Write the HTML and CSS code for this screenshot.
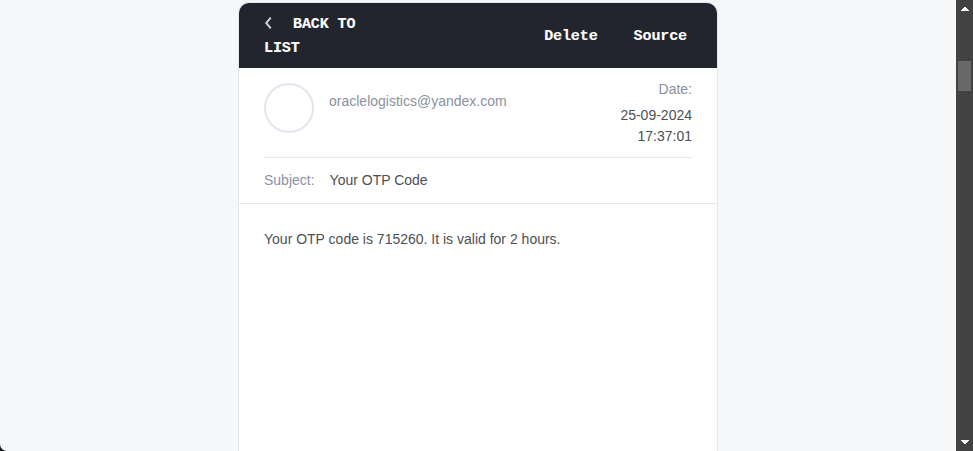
FILE: index.html
```html
<!DOCTYPE html>
<html lang="en">
<head>
<meta charset="utf-8">
<title>Message</title>
<link rel="stylesheet" href="styles.css">
</head>
<body>
<div class="page">
  <main class="viewport">
    <article class="card">
      <header class="toolbar">
        <a class="back"><svg class="chevron" viewBox="0 0 8 12" width="8" height="12"><path d="M6.8.6 2.2 6l4.6 5.4"/></svg>BACK TO LIST</a>
        <nav class="actions"><a>Delete</a><a>Source</a></nav>
      </header>
      <section class="sender">
        <span class="avatar"></span>
        <span class="email">oraclelogistics@yandex.com</span>
        <div class="date"><span class="label">Date:</span><time>25-09-2024 17:37:01</time></div>
      </section>
      <section class="subject"><span class="label">Subject:</span><span>Your OTP Code</span></section>
      <section class="message">Your OTP code is 715260. It is valid for 2 hours.</section>
    </article>
  </main>
  <aside class="scrollbar">
    <svg width="8" height="4" viewBox="0 0 8 4"><path d="M3 0h2v1h1v1h1v1h1v1H0V3h1V2h1V1h1z"/></svg>
    <div class="track"><div class="thumb"></div></div>
    <svg width="8" height="4" viewBox="0 0 8 4"><path d="M0 0h8v1H7v1H6v1H5v1H3V3H2V2H1V1H0z"/></svg>
  </aside>
</div>
</body>
</html>
```
FILE: styles.css
```css
* { box-sizing: border-box; }
body {
  margin: 0;
  background: #17181b;
  color: #4d5055;
  font: 14px/21px "Liberation Sans", Arial, sans-serif;
}
.page { display: flex; height: 451px; overflow: hidden; }
.viewport {
  flex: 1;
  padding-top: 2px;
  background: #f5f7f9;
  border-bottom-left-radius: 7px;
  overflow: hidden;
}
.card {
  width: 480px;
  height: 480px;
  margin: 0 auto;
  background: #fff;
  border: 1px solid #e4e5ef;
  border-radius: 11px;
  overflow: hidden;
}
.toolbar {
  display: flex;
  align-items: center;
  justify-content: space-between;
  height: 65px;
  padding: 2px 30px 0 25px;
  background: #22252d;
  color: #fff;
  font: bold 15px/24px "Liberation Mono", monospace;
  letter-spacing: -.1px;
  -webkit-text-stroke: .15px #fff;
}
.back { width: 112px; }
.chevron {
  margin-right: 21px;
  vertical-align: -1px;
  fill: none;
  stroke: #c8cbd2;
  stroke-width: 2;
}
.actions { display: flex; gap: 36px; }
.sender {
  display: flex;
  height: 90px;
  margin: 0 25px;
  padding-top: 11px;
  border-bottom: 1px solid #e8e9ed;
}
.avatar {
  width: 50px;
  height: 50px;
  margin: 4px 15px 0 0;
  border: 2px solid #e4e4ef;
  border-radius: 50%;
}
.email { margin-top: 12px; color: #8b91a2; }
.label { color: #8b91a2; }
.date { width: 90px; margin-left: auto; text-align: right; }
.date .label { display: block; margin-bottom: 5px; }
.date time { display: block; }
.subject {
  display: flex;
  gap: 15px;
  height: 46px;
  padding: 12px 25px;
  border-bottom: 1px solid #e4e5ef;
}
.message { padding: 25px; }
.scrollbar {
  display: flex;
  flex-direction: column;
  align-items: center;
  width: 17px;
  padding: 7px 0;
  background: #424242;
}
.scrollbar svg { fill: #fff; }
.track { flex: 1; padding-top: 50px; }
.thumb { width: 13px; height: 30px; background: #686868; }
```
